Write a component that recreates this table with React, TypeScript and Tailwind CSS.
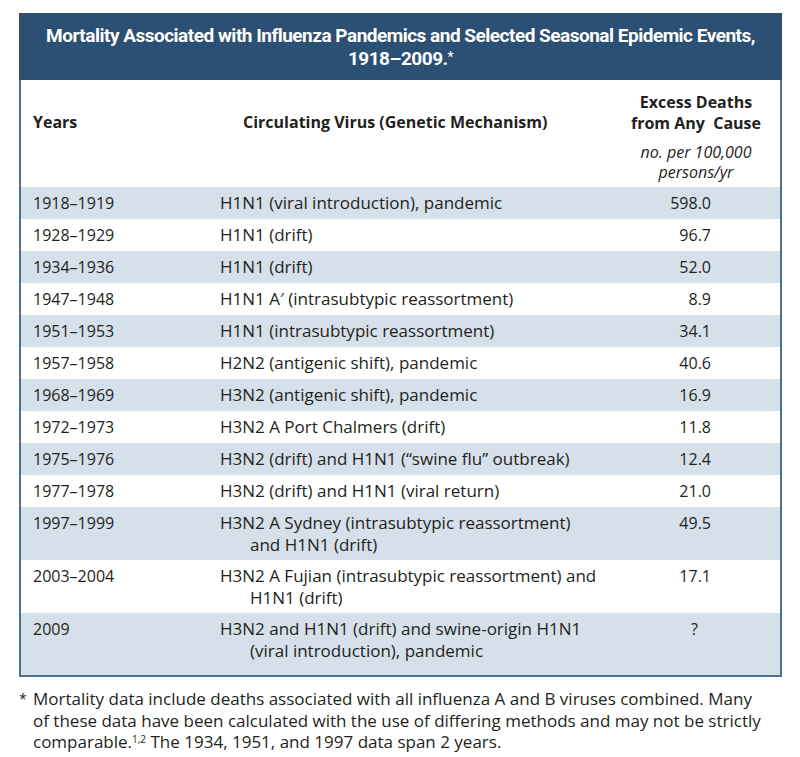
import React from "react";

type Row = { years: string; lines: string[]; value: string; q?: boolean };

const rows: Row[] = [
  { years: "1918–1919", lines: ["H1N1 (viral introduction), pandemic"], value: "598.0" },
  { years: "1928–1929", lines: ["H1N1 (drift)"], value: "96.7" },
  { years: "1934–1936", lines: ["H1N1 (drift)"], value: "52.0" },
  { years: "1947–1948", lines: ["H1N1 A′ (intrasubtypic reassortment)"], value: "8.9" },
  { years: "1951–1953", lines: ["H1N1 (intrasubtypic reassortment)"], value: "34.1" },
  { years: "1957–1958", lines: ["H2N2 (antigenic shift), pandemic"], value: "40.6" },
  { years: "1968–1969", lines: ["H3N2 (antigenic shift), pandemic"], value: "16.9" },
  { years: "1972–1973", lines: ["H3N2 A Port Chalmers (drift)"], value: "11.8" },
  { years: "1975–1976", lines: ["H3N2 (drift) and H1N1 (“swine flu” outbreak)"], value: "12.4" },
  { years: "1977–1978", lines: ["H3N2 (drift) and H1N1 (viral return)"], value: "21.0" },
  { years: "1997–1999", lines: ["H3N2 A Sydney (intrasubtypic reassortment)", "and H1N1 (drift)"], value: "49.5" },
  { years: "2003–2004", lines: ["H3N2 A Fujian (intrasubtypic reassortment) and", "H1N1 (drift)"], value: "17.1" },
  { years: "2009", lines: ["H3N2 and H1N1 (drift) and swine-origin H1N1", "(viral introduction), pandemic"], value: "?", q: true },
];

export default function App() {
  return (
    <div
      className="w-[800px] h-[757px] bg-white pl-[19px] pt-[13px] text-[#231f20]"
      style={{ fontFamily: '"Open Sans", "Noto Sans", sans-serif' }}
    >
      <div className="w-[763px] border-x-2 border-b-2 border-[#4b6f95]">
        <div
          className="-mx-[2px] h-[67px] pt-[1px] bg-[#2c5073] text-white font-bold text-[19px] leading-[23px] flex flex-col items-center justify-center tracking-[-0.5px]"
          style={{ fontFamily: 'Roboto, "Open Sans", sans-serif' }}
        >
          <div>Mortality Associated with Influenza Pandemics and Selected Seasonal Epidemic Events,</div>
          <div>
            1918–2009.<span className="text-[14px] align-top relative -top-[1px] font-normal">*</span>
          </div>
        </div>

        <div className="grid grid-cols-[197px_390px_172px] h-[107px] text-[16px]">
          <div className="pl-[12px] pt-[32px] font-bold leading-[21px]">Years</div>
          <div className="pl-[25px] pt-[32px] font-bold leading-[21px]">Circulating Virus (Genetic Mechanism)</div>
          <div className="pt-[12px] text-center pl-[4px]">
            <div className="font-bold leading-[21px]">Excess Deaths</div>
            <div className="font-bold leading-[21px]">from Any&nbsp; Cause</div>
            <div className="italic leading-[20px] mt-[8px]">no. per 100,000</div>
            <div className="italic leading-[20px]">persons/yr</div>
          </div>
        </div>

        {rows.map((r, i) => {
          const striped = i % 2 === 0;
          const multi = r.lines.length > 1;
          const last = i === rows.length - 1;
          return (
            <div
              key={r.years}
              className={`grid grid-cols-[197px_390px_172px] text-[16px] leading-[22px] pt-[5px] ${
                last ? "pb-[13px]" : multi ? "pb-[4px]" : "pb-[5px]"
              } ${striped ? "bg-[#d5e0ea]" : "bg-white"}`}
            >
              <div className="pl-[12px]">{r.years}</div>
              <div className="text-[17px] pl-[2px]">
                {r.lines.map((l, j) => (
                  <div key={j} className={j > 0 ? "pl-[30px]" : ""}>
                    {l}
                  </div>
                ))}
              </div>
              <div className={`text-right ${r.q ? "pr-[82px]" : "pr-[69px]"}`}>{r.value}</div>
            </div>
          );
        })}
      </div>

      <div className="flex mt-[11px] text-[17px] leading-[21.5px]">
        <div className="w-[14px] shrink-0 text-[14px]">*</div>
        <div>
          <div>Mortality data include deaths associated with all influenza A and B viruses combined. Many</div>
          <div>of these data have been calculated with the use of differing methods and may not be strictly</div>
          <div>
            comparable.<sup className="text-[10px]">1,2</sup> The 1934, 1951, and 1997 data span 2 years.
          </div>
        </div>
      </div>
    </div>
  );
}
